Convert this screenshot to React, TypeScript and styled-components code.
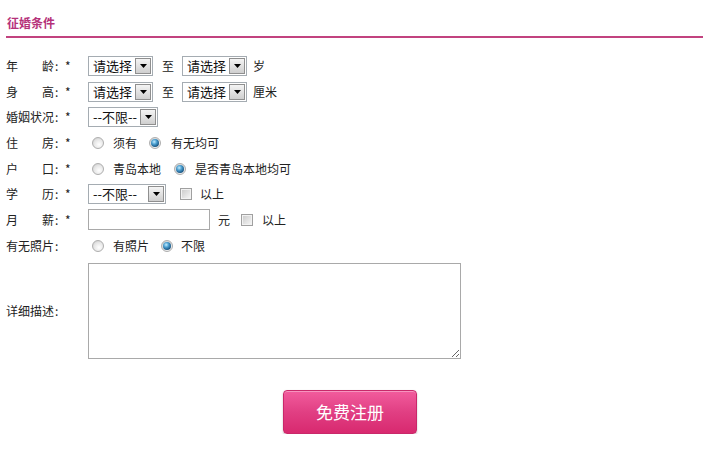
import styled, { createGlobalStyle } from "styled-components";

const GlobalStyle = createGlobalStyle`
  body {
    margin: 0;
    background: #fff;
    font-family: "Noto Sans CJK SC", "Liberation Sans", sans-serif;
    font-size: 12px;
    color: #222;
  }
`;

const Container = styled.div`
  width: 697px;
  margin-left: 6px;
`;

const Header = styled.div`
  padding: 15px 0 5px 1px;
  line-height: 16px;
  border-bottom: 2px solid #c2437f;
`;

const Title = styled.h2`
  margin: 0;
  font-size: 12px;
  font-weight: bold;
  color: #b5317a;
`;

const Form = styled.div`
  margin-top: 15px;
`;

const Row = styled.div`
  display: flex;
  align-items: center;
  height: 25.7px;
  white-space: nowrap;
`;

const TextRow = styled.div`
  display: flex;
  align-items: center;
  margin-top: 4px;
`;

const Label = styled.div`
  display: flex;
  width: 82px;
  flex-shrink: 0;
  line-height: 16px;
`;

const LabelText = styled.span`
  width: 48px;
  text-align: justify;
  text-align-last: justify;
`;

const Colon = styled.span`
  width: 11px;
  padding-left: 1px;
  box-sizing: border-box;
`;

const Star = styled.span`
  color: #222;
`;

const Text = styled.span<{ $ml?: number }>`
  margin-left: ${(p) => p.$ml ?? 0}px;
  line-height: 16px;
`;

const SelectBox = styled.div<{ $w: number; $ml?: number }>`
  display: flex;
  align-items: center;
  box-sizing: border-box;
  width: ${(p) => p.$w}px;
  height: 20px;
  margin-left: ${(p) => p.$ml ?? 0}px;
  border: 1px solid #a5acb2;
  background: #fff;
`;

const SelectText = styled.span`
  flex: 1;
  padding-left: 4px;
  font-size: 13px;
  color: #111;
  line-height: 18px;
`;

const Arrow = styled.span`
  display: flex;
  align-items: center;
  justify-content: center;
  box-sizing: border-box;
  width: 16px;
  height: 16px;
  margin-right: 1px;
  border: 1px solid #8f8f8f;
  background: linear-gradient(#f4f4f4, #cfcfcf);
`;

const Radio = styled.span<{ $checked?: boolean; $ml?: number }>`
  position: relative;
  box-sizing: border-box;
  width: 12px;
  height: 12px;
  margin-left: ${(p) => p.$ml ?? 0}px;
  border-radius: 50%;
  border: 1px solid #aeaeae;
  background: radial-gradient(circle at 60% 65%, #fff 0%, #e6e6e6 55%, #c4c4c4 100%);
  &::after {
    content: "";
    display: ${(p) => (p.$checked ? "block" : "none")};
    position: absolute;
    left: 1px;
    top: 1px;
    width: 8px;
    height: 8px;
    border-radius: 50%;
    background: radial-gradient(circle at 40% 35%, #c4ecff 0%, #4b9fd0 35%, #1d5a88 70%, #0f2f4d 100%);
  }
`;

const Checkbox = styled.span<{ $ml?: number }>`
  box-sizing: border-box;
  width: 12px;
  height: 12px;
  margin-left: ${(p) => p.$ml ?? 0}px;
  border: 1px solid #a0a0a0;
  background: linear-gradient(135deg, #c8c8c8, #f8f8f8);
  box-shadow: inset 0 0 0 1px #f2f2f2;
`;

const Input = styled.input`
  box-sizing: border-box;
  width: 122px;
  height: 21px;
  margin: 0;
  border: 1px solid #a9a9a9;
  font: inherit;
`;

const TextArea = styled.textarea`
  display: block;
  box-sizing: border-box;
  width: 373px;
  height: 96px;
  margin: 0;
  border: 1px solid #a9a9a9;
  font: inherit;
`;

const ButtonRow = styled.div`
  display: flex;
  justify-content: center;
  padding-right: 9px;
  margin-top: 31px;
`;

const Button = styled.button`
  width: 134px;
  height: 44px;
  border: 1px solid #c9286a;
  border-radius: 4px;
  background: linear-gradient(#f25c9d, #e13f83 50%, #d8296f);
  box-shadow: inset 0 1px 0 rgba(255, 255, 255, 0.35), 0 1px 2px rgba(0, 0, 0, 0.25);
  color: #fff;
  font-family: "Noto Sans CJK SC", sans-serif;
  font-size: 17px;
  cursor: pointer;
`;

function Select({ w, text, ml }: { w: number; text: string; ml?: number }) {
  return (
    <SelectBox $w={w} $ml={ml}>
      <SelectText>{text}</SelectText>
      <Arrow>
        <svg width="7" height="4" viewBox="0 0 7 4">
          <path d="M0 0h7L3.5 4z" fill="#000" />
        </svg>
      </Arrow>
    </SelectBox>
  );
}

function FieldLabel({ text, star = true }: { text: string; star?: boolean }) {
  return (
    <Label>
      <LabelText>{text}</LabelText>
      <Colon>:</Colon>
      {star && <Star>*</Star>}
    </Label>
  );
}

export default function App() {
  return (
    <Container>
      <GlobalStyle />
      <Header>
        <Title>征婚条件</Title>
      </Header>
      <Form>
        <Row>
          <FieldLabel text="年龄" />
          <Select w={65} text="请选择" />
          <Text $ml={9}>至</Text>
          <Select w={65} text="请选择" ml={8} />
          <Text $ml={6}>岁</Text>
        </Row>
        <Row>
          <FieldLabel text="身高" />
          <Select w={65} text="请选择" />
          <Text $ml={9}>至</Text>
          <Select w={65} text="请选择" ml={8} />
          <Text $ml={6}>厘米</Text>
        </Row>
        <Row>
          <FieldLabel text="婚姻状况" />
          <Select w={70} text="--不限--" />
        </Row>
        <Row>
          <FieldLabel text="住房" />
          <Radio $ml={4} />
          <Text $ml={9}>须有</Text>
          <Radio $checked $ml={12} />
          <Text $ml={10}>有无均可</Text>
        </Row>
        <Row>
          <FieldLabel text="户口" />
          <Radio $ml={4} />
          <Text $ml={9}>青岛本地</Text>
          <Radio $checked $ml={13} />
          <Text $ml={9}>是否青岛本地均可</Text>
        </Row>
        <Row>
          <FieldLabel text="学历" />
          <Select w={78} text="--不限--" />
          <Checkbox $ml={14} />
          <Text $ml={8}>以上</Text>
        </Row>
        <Row>
          <FieldLabel text="月薪" />
          <Input />
          <Text $ml={8}>元</Text>
          <Checkbox $ml={11} />
          <Text $ml={9}>以上</Text>
        </Row>
        <Row>
          <FieldLabel text="有无照片" star={false} />
          <Radio $ml={4} />
          <Text $ml={9}>有照片</Text>
          <Radio $checked $ml={12} />
          <Text $ml={8}>不限</Text>
        </Row>
        <TextRow>
          <FieldLabel text="详细描述" star={false} />
          <TextArea />
        </TextRow>
        <ButtonRow>
          <Button>免费注册</Button>
        </ButtonRow>
      </Form>
    </Container>
  );
}
